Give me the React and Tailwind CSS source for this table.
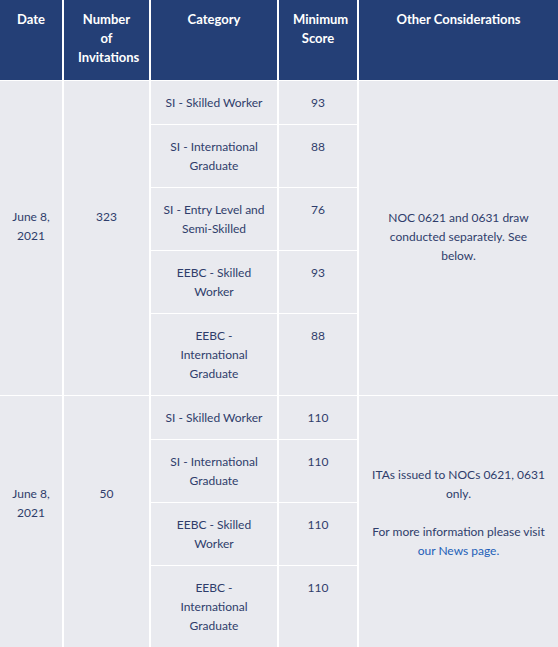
const draws = [
  {
    date: ['June 8,', '2021'],
    datePad: 'pb-[36px]',
    count: '323',
    countPad: 'pb-[55px]',
    rows: [
      ['SI - Skilled Worker', '93'],
      ['SI - International Graduate', '88'],
      ['SI - Entry Level and Semi-Skilled', '76'],
      ['EEBC - Skilled Worker', '93'],
      ['EEBC - International Graduate', '88'],
    ],
    span: 'row-span-5',
    notePad: 'pb-[15px]',
    note: (
      <p className="px-1">NOC 0621 and 0631 draw conducted separately. See below.</p>
    ),
  },
  {
    date: ['June 8,', '2021'],
    datePad: 'pb-[49px]',
    count: '50',
    countPad: 'pb-[68px]',
    rows: [
      ['SI - Skilled Worker', '110'],
      ['SI - International Graduate', '110'],
      ['EEBC - Skilled Worker', '110'],
      ['EEBC - International Graduate', '110'],
    ],
    span: 'row-span-4',
    notePad: 'pb-[31px]',
    note: (
      <>
        <p className="mb-[19px]">ITAs issued to NOCs 0621, 0631 only.</p>
        <p>
          For more information please visit{' '}
          <a href="#" className="text-[#1d5fb8]">our News page.</a>
        </p>
      </>
    ),
  },
]

function Head({ children }) {
  return (
    <div className="bg-[#243f76] text-white text-[13px] font-bold text-center px-[14px] pt-[10px] leading-[19px] h-[80px]">
      {children}
    </div>
  )
}

function Cell({ children, className = '' }) {
  return (
    <div className={'bg-[#e9eaef] text-center px-3 py-3 leading-[19px] ' + className}>
      {children}
    </div>
  )
}

export default function App() {
  return (
    <div
      className="w-[558px] h-[647px] overflow-hidden bg-white text-[12px] text-[#2f3d6b]"
      style={{ fontFamily: 'Lato, "Open Sans", sans-serif' }}
    >
      <div className="grid grid-cols-[62px_85px_126px_78px_1fr] gap-x-[2px] gap-y-px">
        <Head>Date</Head>
        <Head>Number of Invitations</Head>
        <Head>Category</Head>
        <Head>Minimum Score</Head>
        <Head>Other Considerations</Head>

        {draws.map((d, i) =>
          d.rows.map((r, j) => (
            <>
              {j === 0 && (
                <Cell className={d.span + ' flex items-center justify-center ' + d.datePad}>
                  <div>
                    {d.date[0]}
                    <br />
                    {d.date[1]}
                  </div>
                </Cell>
              )}
              {j === 0 && (
                <Cell className={d.span + ' flex items-center justify-center ' + d.countPad}>
                  {d.count}
                </Cell>
              )}
              <Cell key={'c' + i + j}>{r[0]}</Cell>
              <Cell key={'s' + i + j}>{r[1]}</Cell>
              {j === 0 && (
                <Cell className={d.span + ' flex flex-col items-center justify-center ' + d.notePad}>
                  <div>{d.note}</div>
                </Cell>
              )}
            </>
          ))
        )}
      </div>
    </div>
  )
}
